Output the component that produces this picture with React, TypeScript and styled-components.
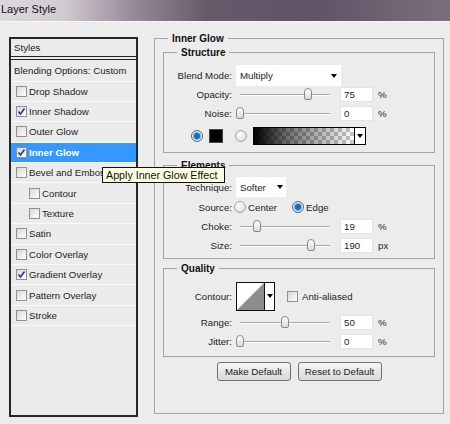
import React from 'react';
import styled, { createGlobalStyle } from 'styled-components';

const GlobalStyle = createGlobalStyle`
  * { box-sizing: border-box; }
  html, body { margin: 0; padding: 0; background: #ececec; }
  body {
    font-family: "Liberation Sans", Arial, sans-serif;
    font-size: 9.7px;
    color: #1d1d1d;
  }
`;

const EFFECTS = [
  { name: 'Drop Shadow' },
  { name: 'Inner Shadow', checked: true },
  { name: 'Outer Glow' },
  { name: 'Inner Glow', checked: true, selected: true },
  { name: 'Bevel and Emboss' },
  { name: 'Contour', indent: true },
  { name: 'Texture', indent: true },
  { name: 'Satin' },
  { name: 'Color Overlay' },
  { name: 'Gradient Overlay', checked: true },
  { name: 'Pattern Overlay' },
  { name: 'Stroke' },
];

const Checkbox = ({ checked }: { checked?: boolean }) => (
  <Box>
    {checked && (
      <svg width="9" height="9" viewBox="0 0 9 9">
        <path d="M1.5 4.5 L3.5 7 L7.5 1.5" fill="none" stroke="#1f3a8c" strokeWidth="1.6" />
      </svg>
    )}
  </Box>
);

const Slider = ({ pos }: { pos: number }) => (
  <SliderBox>
    <Track>
      <Thumb style={{ left: `${pos * 100}%` }} />
    </Track>
  </SliderBox>
);

const App = () => {
  return (
    <Window>
      <GlobalStyle />
      <TitleBar>Layer Style</TitleBar>
      <Body>
        <StylesPanel>
          <PanelHeader>Styles</PanelHeader>
          <BlendRow>Blending Options: Custom</BlendRow>
          {EFFECTS.map((fx) => (
            <EffectRow key={fx.name} $selected={fx.selected} $indent={fx.indent}>
              <Checkbox checked={fx.checked} />
              <span>{fx.name}</span>
            </EffectRow>
          ))}
        </StylesPanel>

        <Group $pt={1} $pb={32} $w={290}>
          <Legend>Inner Glow</Legend>

          <Group $pt={7} $pb={7}>
            <Legend>Structure</Legend>
            <Row $h={19}>
              <Label>Blend Mode:</Label>
              <Select $w={105} $h={21} $pr={4}>
                Multiply
                <Caret />
              </Select>
            </Row>
            <Row $h={19}>
              <Label>Opacity:</Label>
              <Slider pos={0.75} />
              <NumBox>75</NumBox>
              <Unit>%</Unit>
            </Row>
            <Row $h={19}>
              <Label>Noise:</Label>
              <Slider pos={0} />
              <NumBox>0</NumBox>
              <Unit>%</Unit>
            </Row>
            <ColorRow>
              <Radio $on />
              <Swatch />
              <Radio $ml={12} />
              <GradientBar>
                <GradientFill />
                <GradientArrow>
                  <Caret />
                </GradientArrow>
              </GradientBar>
            </ColorRow>
          </Group>

          <Group $pt={5} $pb={3} $mt={6}>
            <Legend>Elements</Legend>
            <Row $h={20}>
              <Label>Technique:</Label>
              <Select $w={50} $h={20} $pr={3}>
                Softer
                <Caret />
              </Select>
            </Row>
            <Row $h={20}>
              <Label>Source:</Label>
              <RadioOption>
                <Radio />
                Center
              </RadioOption>
              <RadioOption $ml={15}>
                <Radio $on />
                Edge
              </RadioOption>
            </Row>
            <Row $h={19}>
              <Label>Choke:</Label>
              <Slider pos={0.19} />
              <NumBox>19</NumBox>
              <Unit>%</Unit>
            </Row>
            <Row $h={19}>
              <Label>Size:</Label>
              <Slider pos={0.79} />
              <NumBox>190</NumBox>
              <Unit>px</Unit>
            </Row>
          </Group>

          <Group $pt={6} $pb={5} $mt={3}>
            <Legend>Quality</Legend>
            <Row $h={30}>
              <Label>Contour:</Label>
              <ContourBox>
                <svg width="27" height="27" viewBox="0 0 27 27">
                  <rect width="27" height="27" fill="#fff" />
                  <polygon points="0,27 27,0 27,27" fill="#8d8d8d" />
                </svg>
                <ContourArrow>
                  <Caret />
                </ContourArrow>
              </ContourBox>
              <AntiAlias>
                <Checkbox />
                Anti-aliased
              </AntiAlias>
            </Row>
            <Row $h={19} $mt={2}>
              <Label>Range:</Label>
              <Slider pos={0.5} />
              <NumBox>50</NumBox>
              <Unit>%</Unit>
            </Row>
            <Row $h={19}>
              <Label>Jitter:</Label>
              <Slider pos={0} />
              <NumBox>0</NumBox>
              <Unit>%</Unit>
            </Row>
          </Group>

          <Buttons>
            <Button $w={74}>Make Default</Button>
            <Button $w={84}>Reset to Default</Button>
          </Buttons>
        </Group>
      </Body>
      <Tooltip>Apply Inner Glow Effect</Tooltip>
    </Window>
  );
};

const Window = styled.div`
  position: relative;
  width: 450px;
  height: 424px;
  overflow: hidden;
  background: #ececec;
`;

const TitleBar = styled.div`
  height: 22px;
  padding: 0 0 3px 1px;
  display: flex;
  align-items: center;
  font-size: 11px;
  color: #111;
  background: linear-gradient(
    90deg,
    #ddd8dd 0,
    #d2cbd2 14%,
    #948996 30%,
    #655a6a 46%,
    #5f5466 70%,
    #7a6f7d 100%
  );
  border-bottom: 1px solid #f7f7f7;
`;

const Body = styled.div`
  display: flex;
  align-items: flex-start;
  gap: 16px;
  padding: 10px 0 0 9px;
`;

const StylesPanel = styled.div`
  flex: none;
  width: 129px;
  height: 380px;
  margin-top: 5px;
  border: 2px solid #262626;
  background: #ebebeb;
`;

const PanelHeader = styled.div`
  height: 21px;
  padding: 0 0 0 3px;
  display: flex;
  align-items: center;
  border-bottom: 4px double #262626;
`;

const BlendRow = styled.div`
  height: 21.5px;
  padding-left: 3px;
  display: flex;
  align-items: center;
  border-bottom: 1px solid #fbfbfb;
`;

const EffectRow = styled.div<{ $selected?: boolean; $indent?: boolean }>`
  height: 20.4px;
  display: flex;
  align-items: center;
  gap: 2px;
  padding-left: ${(p) => (p.$indent ? 18 : 5)}px;
  border-bottom: 1px solid #fbfbfb;
  white-space: nowrap;
  background: ${(p) => (p.$selected ? '#3399ff' : 'transparent')};
  color: ${(p) => (p.$selected ? '#fff' : 'inherit')};
  font-weight: ${(p) => (p.$selected ? 'bold' : 'normal')};
`;

const Box = styled.span`
  flex: none;
  width: 11px;
  height: 11px;
  display: flex;
  align-items: center;
  justify-content: center;
  border: 1px solid #8f9090;
  background: linear-gradient(135deg, #d8d8d8, #ffffff);
`;

const Group = styled.fieldset<{ $pt?: number; $pb?: number; $mt?: number; $w?: number }>`
  flex: none;
  ${(p) => (p.$w ? `width: ${p.$w}px;` : '')}
  min-width: 0;
  margin: ${(p) => p.$mt ?? 0}px 0 0;
  padding: ${(p) => p.$pt ?? 0}px 8px ${(p) => p.$pb ?? 0}px;
  border: 1px solid #a4a4a4;
`;

const Legend = styled.legend`
  margin-left: 5px;
  padding: 0 4px;
  font-size: 10px;
  font-weight: bold;
  line-height: 13px;
  color: #111;
`;

const Row = styled.div<{ $h: number; $mt?: number }>`
  display: flex;
  align-items: center;
  height: ${(p) => p.$h}px;
  margin-top: ${(p) => p.$mt ?? 0}px;
  white-space: nowrap;
`;

const Label = styled.span`
  flex: none;
  width: 60px;
  margin-right: 4px;
  text-align: right;
`;

const Select = styled.div<{ $w: number; $h: number; $pr: number }>`
  flex: none;
  width: ${(p) => p.$w}px;
  height: ${(p) => p.$h}px;
  display: flex;
  align-items: center;
  justify-content: space-between;
  padding: 0 ${(p) => p.$pr}px 0 4px;
  background: #fff;
`;

const Caret = styled.span`
  width: 0;
  height: 0;
  border-left: 3.5px solid transparent;
  border-right: 3.5px solid transparent;
  border-top: 4px solid #000;
`;

const SliderBox = styled.div`
  flex: none;
  width: 98px;
  padding: 0 4px;
  display: flex;
  align-items: center;
`;

const Track = styled.div`
  position: relative;
  width: 100%;
  height: 2px;
  border-top: 1px solid #a9a9a9;
  border-bottom: 1px solid #fdfdfd;
`;

const Thumb = styled.span`
  position: absolute;
  top: -7px;
  width: 8px;
  height: 12px;
  margin-left: -4px;
  border: 1px solid #8a8a8a;
  border-radius: 4px 4px 2px 2px;
  background: linear-gradient(#ffffff, #d9d9d9);
`;

const NumBox = styled.div`
  flex: none;
  width: 33px;
  height: 15px;
  margin-left: 6px;
  padding-left: 3px;
  display: flex;
  align-items: center;
  background: #fff;
  border: 1px solid #e3e3e3;
`;

const Unit = styled.span`
  margin-left: 5px;
`;

const ColorRow = styled.div`
  display: flex;
  align-items: center;
  height: 19px;
  margin-top: 3px;
  padding-left: 19px;
`;

const Radio = styled.span<{ $on?: boolean; $ml?: number }>`
  flex: none;
  width: 12px;
  height: 12px;
  margin-left: ${(p) => p.$ml ?? 0}px;
  border-radius: 50%;
  border: 1px solid ${(p) => (p.$on ? '#4d6a86' : '#a2a2a2')};
  background: ${(p) =>
    p.$on
      ? 'radial-gradient(circle at 50% 50%, #1a6fb8 0 2.5px, #6fb2e8 3.5px, #e9eef3 4.5px)'
      : 'radial-gradient(circle at 40% 35%, #ffffff, #d6d6d6)'};
`;

const Swatch = styled.span`
  flex: none;
  width: 14px;
  height: 14px;
  margin-left: 6px;
  background: #000;
  border: 1px solid #444;
`;

const GradientBar = styled.div`
  flex: none;
  display: flex;
  width: 113px;
  height: 18px;
  margin-left: 6px;
  border: 1px solid #000;
`;

const GradientFill = styled.div`
  flex: 1;
  background: linear-gradient(90deg, #000 0%, rgba(0, 0, 0, 0.55) 35%, rgba(0, 0, 0, 0) 100%),
    repeating-conic-gradient(#c4c4c4 0 25%, #ffffff 0 50%) 0 0 / 8px 8px;
`;

const GradientArrow = styled.div`
  flex: none;
  width: 11px;
  display: flex;
  align-items: center;
  justify-content: center;
  border-left: 1px solid #000;
  background: #fff;
`;

const RadioOption = styled.span<{ $ml?: number }>`
  display: flex;
  align-items: center;
  gap: 2px;
  margin-left: ${(p) => p.$ml ?? -2}px;
`;

const ContourBox = styled.div`
  flex: none;
  display: flex;
  width: 39px;
  height: 29px;
  border: 1px solid #111;
  background: #fff;
`;

const ContourArrow = styled.div`
  flex: 1;
  display: flex;
  align-items: center;
  justify-content: center;
  border-left: 1px solid #111;
`;

const AntiAlias = styled.span`
  display: flex;
  align-items: center;
  gap: 4px;
  margin-left: 12px;
`;

const Buttons = styled.div`
  display: flex;
  justify-content: center;
  gap: 7px;
  margin-top: 5px;
`;

const Button = styled.button<{ $w: number }>`
  width: ${(p) => p.$w}px;
  height: 19px;
  padding: 0;
  font-family: inherit;
  font-size: 9.7px;
  color: #1d1d1d;
  border: 1px solid #707070;
  border-radius: 3px;
  background: linear-gradient(#f7f7f7, #e6e6e6 50%, #d9d9d9);
`;

const Tooltip = styled.div`
  position: absolute;
  left: 102px;
  top: 167px;
  width: 123px;
  height: 16px;
  padding-left: 3px;
  display: flex;
  align-items: center;
  font-size: 10.7px;
  white-space: nowrap;
  color: #111;
  background: #ffffe1;
  border: 1px solid #111;
`;

export default App;
